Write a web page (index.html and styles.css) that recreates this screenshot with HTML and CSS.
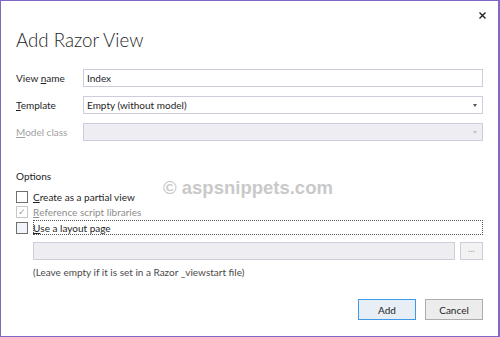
FILE: index.html
```html
<!DOCTYPE html>
<html lang="en">
<head>
  <meta charset="UTF-8">
  <title>Add Razor View</title>
  <link rel="stylesheet" href="styles.css">
</head>
<body>
  <div class="dialog">
    <div class="close">
      <svg width="7" height="7" viewBox="0 0 7 7"><path d="M0.5 0.5 L6.5 6.5 M6.5 0.5 L0.5 6.5" stroke="#1e1e1e" stroke-width="1.3"/></svg>
    </div>

    <h1>Add Razor View</h1>

    <div class="form">
      <label>View <u>n</u>ame</label>
      <div class="field">Index</div>

      <label><u>T</u>emplate</label>
      <div class="field select">Empty (without model)<span class="arrow"></span></div>

      <label class="disabled"><u>M</u>odel class</label>
      <div class="field select off"><span class="arrow grey"></span></div>
    </div>

    <div class="options">
      <div class="options-title">Options</div>
      <div class="check"><span class="box"></span><u>C</u>reate as a partial view</div>
      <div class="check disabled"><span class="box checked">&#10003;</span><u>R</u>eference script libraries</div>
      <div class="check focus"><span class="box hover"></span><u>U</u>se a layout page</div>

      <div class="layout-row">
        <div class="field off"></div>
        <div class="browse">...</div>
      </div>
      <div class="hint">(Leave empty if it is set in a Razor _viewstart file)</div>
    </div>

    <div class="actions">
      <button class="default">Add</button>
      <button>Cancel</button>
    </div>

    <!-- marca de agua -->
    <div class="watermark">&copy; aspsnippets.com</div>
  </div>
</body>
</html>
```

FILE: styles.css
```css
body {
  margin: 0;
  padding: 0;
  background: white;
  font-family: Lato, "Open Sans", sans-serif;
  font-size: 10px;
  color: #1e1e1e;
}

.dialog {
  position: relative;
  width: 500px;
  height: 337px;
  box-sizing: border-box;
  border: 1px solid #7f68c8;
  border-right-width: 2px;
  background: white;
  padding: 0 15px 0 15px;
}

.close {
  position: absolute;
  top: 11px;
  right: 12px;
  line-height: 0;
}

h1 {
  margin: 0;
  padding-top: 26px;
  font-size: 18.7px;
  font-weight: 300;
  line-height: 26px;
  color: #1e1e1e;
}

.form {
  display: grid;
  grid-template-columns: 67px 1fr;
  row-gap: 9px;
  margin-top: 16px;
  align-items: center;
}

.form label.disabled {
  color: #a2a2a2;
}

.field {
  position: relative;
  height: 18px;
  box-sizing: border-box;
  border: 1px solid #cccedb;
  background: white;
  padding-left: 3px;
  line-height: 16px;
}

.field.off {
  background: #eeeef2;
}

.arrow {
  position: absolute;
  right: 5px;
  top: 7px;
  border-left: 2.5px solid transparent;
  border-right: 2.5px solid transparent;
  border-top: 3px solid #555;
}

.arrow.grey {
  border-top-color: #c2c2c2;
}

.options {
  margin-top: 28px;
}

.options-title {
  line-height: 14px;
  margin-bottom: 6px;
}

.check {
  display: flex;
  align-items: center;
  height: 15px;
  box-sizing: border-box;
}

.check.disabled {
  color: #8d8d8d;
}

.check.focus {
  outline: 1px dotted #555;
  outline-offset: -1px;
  margin-left: 17px;
  margin-top: 1px;
}

.box {
  width: 12px;
  height: 12px;
  box-sizing: border-box;
  border: 1px solid #6f6f6f;
  background: white;
  margin-right: 5px;
  font-size: 9px;
  line-height: 10px;
  text-align: center;
  color: #a0a0a0;
}

.box.checked {
  border-color: #c8c8c8;
}

.check.focus .box {
  margin-left: -17px;
  margin-right: 5px;
  background: #f2f6fb;
}

.layout-row {
  display: flex;
  gap: 5px;
  margin-top: 7px;
  margin-left: 17px;
}

.layout-row .field {
  flex: 1;
  height: 18px;
}

.browse {
  width: 23px;
  height: 18px;
  box-sizing: border-box;
  border: 1px solid #cccedb;
  background: #f2f2f2;
  color: #a0a0a0;
  text-align: center;
  line-height: 12px;
  font-size: 9px;
}

.hint {
  margin-left: 17px;
  margin-top: 5px;
  line-height: 14px;
  color: #4a4a4a;
}

.actions {
  display: flex;
  justify-content: flex-end;
  gap: 9px;
  margin-top: 20px;
}

.actions button {
  width: 58px;
  height: 21px;
  font-family: inherit;
  font-size: 10px;
  color: #1e1e1e;
  background: #ececec;
  border: 1px solid #adadad;
  padding: 0;
}

.actions button.default {
  border-color: #3c9ae8;
  background: #e8eef5;
}

.watermark {
  position: absolute;
  left: 162px;
  top: 176px;
  font-family: "Liberation Sans", Arial, sans-serif;
  font-weight: bold;
  font-size: 18.5px;
  color: #c9c9c9;
}
```
